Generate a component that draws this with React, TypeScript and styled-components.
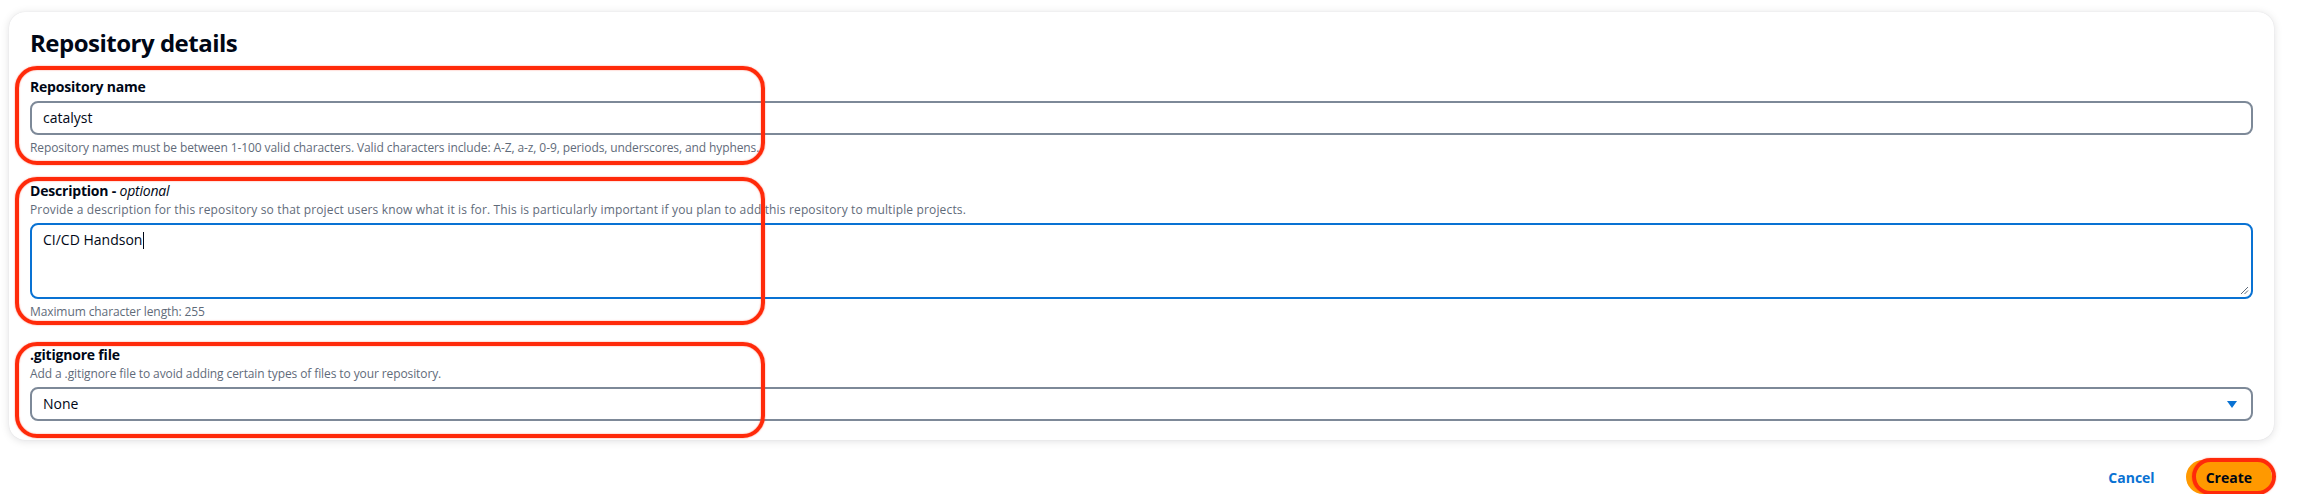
import React from "react";
import styled, { createGlobalStyle } from "styled-components";

const GlobalStyle = createGlobalStyle`
  html, body { margin: 0; padding: 0; background: #ffffff; }
  body {
    font-family: "Open Sans", "Noto Sans", "Liberation Sans", sans-serif;
    color: #000716;
    -webkit-font-smoothing: antialiased;
  }
  * { box-sizing: border-box; }
`;

const Page = styled.div`
  padding: 12px 23px 0 9px;
`;

const Card = styled.section`
  background: #ffffff;
  border-radius: 16px;
  box-shadow: 0 1px 8px rgba(0, 7, 22, 0.13), 0 0 1px rgba(0, 7, 22, 0.12);
  padding: 16px 21px 19px 21px;
`;

const Heading = styled.h2`
  margin: 0 0 19px;
  font-size: 24px;
  line-height: 30px;
  font-weight: 700;
  letter-spacing: -0.5px;
  color: #000716;
`;

const Fields = styled.div`
  display: flex;
  flex-direction: column;
  gap: 24px;
`;

const Field = styled.div`
  position: relative;
  display: flex;
  flex-direction: column;
`;

const Highlight = styled.div<{ $top: number; $bottom: number; $left: number; $width: number; $radius: number }>`
  position: absolute;
  top: ${(p) => p.$top}px;
  bottom: ${(p) => p.$bottom}px;
  left: ${(p) => p.$left}px;
  width: ${(p) => p.$width}px;
  border: 4px solid #ff2a0a;
  border-radius: ${(p) => p.$radius}px;
  box-shadow: 0 0 1.5px rgba(255, 42, 10, 0.7), inset 0 0 1.5px rgba(255, 42, 10, 0.7);
  pointer-events: none;
`;

const Label = styled.label`
  font-size: 14px;
  line-height: 20px;
  font-weight: 700;
  letter-spacing: -0.2px;
  color: #000716;
`;

const Optional = styled.i`
  font-weight: 400;
  font-style: italic;
`;

const Hint = styled.div<{ $gap?: number; $loose?: boolean }>`
  font-size: 12px;
  line-height: 18px;
  color: #5f6b7a;
  letter-spacing: ${(p) => (p.$loose ? "0.15px" : "-0.1px")};
  margin-top: ${(p) => p.$gap ?? 0}px;
`;

const Control = styled.div<{ $height: number; $focused?: boolean; $top?: boolean }>`
  position: relative;
  margin-top: 4px;
  height: ${(p) => p.$height}px;
  border: 2px solid ${(p) => (p.$focused ? "#0972d3" : "#7d8998")};
  border-radius: 8px;
  padding: ${(p) => (p.$top ? "5px 14px 0 11px" : "0 14px 0 11px")};
  display: flex;
  align-items: ${(p) => (p.$top ? "flex-start" : "center")};
  justify-content: space-between;
  font-size: 14px;
  line-height: 20px;
  color: #000716;
  background: #ffffff;
`;

const Value = styled.span`
  display: inline-flex;
  align-items: center;
`;

const Caret = styled.span`
  display: inline-block;
  width: 1px;
  height: 17px;
  background: #000716;
  margin-left: 1px;
`;

const Grip = styled.svg`
  position: absolute;
  right: 2px;
  bottom: 2px;
`;

const Footer = styled.div`
  display: flex;
  justify-content: flex-end;
  align-items: center;
  gap: 11px;
  margin-top: 20px;
  padding-right: 2px;
`;

const LinkButton = styled.button`
  border: none;
  background: transparent;
  padding: 0 20px;
  height: 34px;
  font-family: inherit;
  font-size: 14px;
  font-weight: 700;
  color: #0972d3;
`;

const PrimaryWrap = styled.div`
  position: relative;
`;

const PrimaryButton = styled.button`
  border: none;
  background: #ff9900;
  border-radius: 20px;
  padding: 0 20px;
  height: 34px;
  font-family: inherit;
  font-size: 14px;
  font-weight: 700;
  color: #000716;
`;

const ButtonRing = styled.div`
  position: absolute;
  top: -2px;
  bottom: -1px;
  left: 6px;
  right: -4px;
  border: 4px solid #ff2a0a;
  border-radius: 20px;
  box-shadow: 0 0 1.5px rgba(255, 42, 10, 0.7);
  pointer-events: none;
`;

export default function App() {
  return (
    <>
      <GlobalStyle />
      <Page>
        <Card>
          <Heading>Repository details</Heading>
          <Fields>
            <Field>
              <Label>Repository name</Label>
              <Control $height={34}>
                <Value>catalyst</Value>
              </Control>
              <Hint $gap={4}>
                Repository names must be between 1-100 valid characters. Valid characters include: A-Z, a-z, 0-9,
                periods, underscores, and hyphens.
              </Hint>
              <Highlight $top={-11} $bottom={-8} $left={-15} $width={750} $radius={22} />
            </Field>
            <Field>
              <Label>
                Description - <Optional>optional</Optional>
              </Label>
              <Hint $loose>
                Provide a description for this repository so that project users know what it is for. This is
                particularly important if you plan to add this repository to multiple projects.
              </Hint>
              <Control $height={76} $focused $top>
                <Value>
                  CI/CD Handson
                  <Caret />
                </Value>
                <Grip width="9" height="9" viewBox="0 0 9 9">
                  <path d="M1 8 L8 1 M4.5 8 L8 4.5" stroke="#5f6b7a" strokeWidth="1" fill="none" />
                </Grip>
              </Control>
              <Hint $gap={4}>Maximum character length: 255</Hint>
              <Highlight $top={-4} $bottom={-4} $left={-15} $width={750} $radius={22} />
            </Field>
            <Field>
              <Label>.gitignore file</Label>
              <Hint>Add a .gitignore file to avoid adding certain types of files to your repository.</Hint>
              <Control $height={34}>
                <Value>None</Value>
                <svg width="10" height="7" viewBox="0 0 10 7">
                  <path d="M0 0 H10 L5 7 Z" fill="#0972d3" />
                </svg>
              </Control>
              <Highlight $top={-3} $bottom={-17} $left={-15} $width={750} $radius={22} />
            </Field>
          </Fields>
        </Card>
        <Footer>
          <LinkButton>Cancel</LinkButton>
          <PrimaryWrap>
            <PrimaryButton>Create</PrimaryButton>
            <ButtonRing />
          </PrimaryWrap>
        </Footer>
      </Page>
    </>
  );
}
